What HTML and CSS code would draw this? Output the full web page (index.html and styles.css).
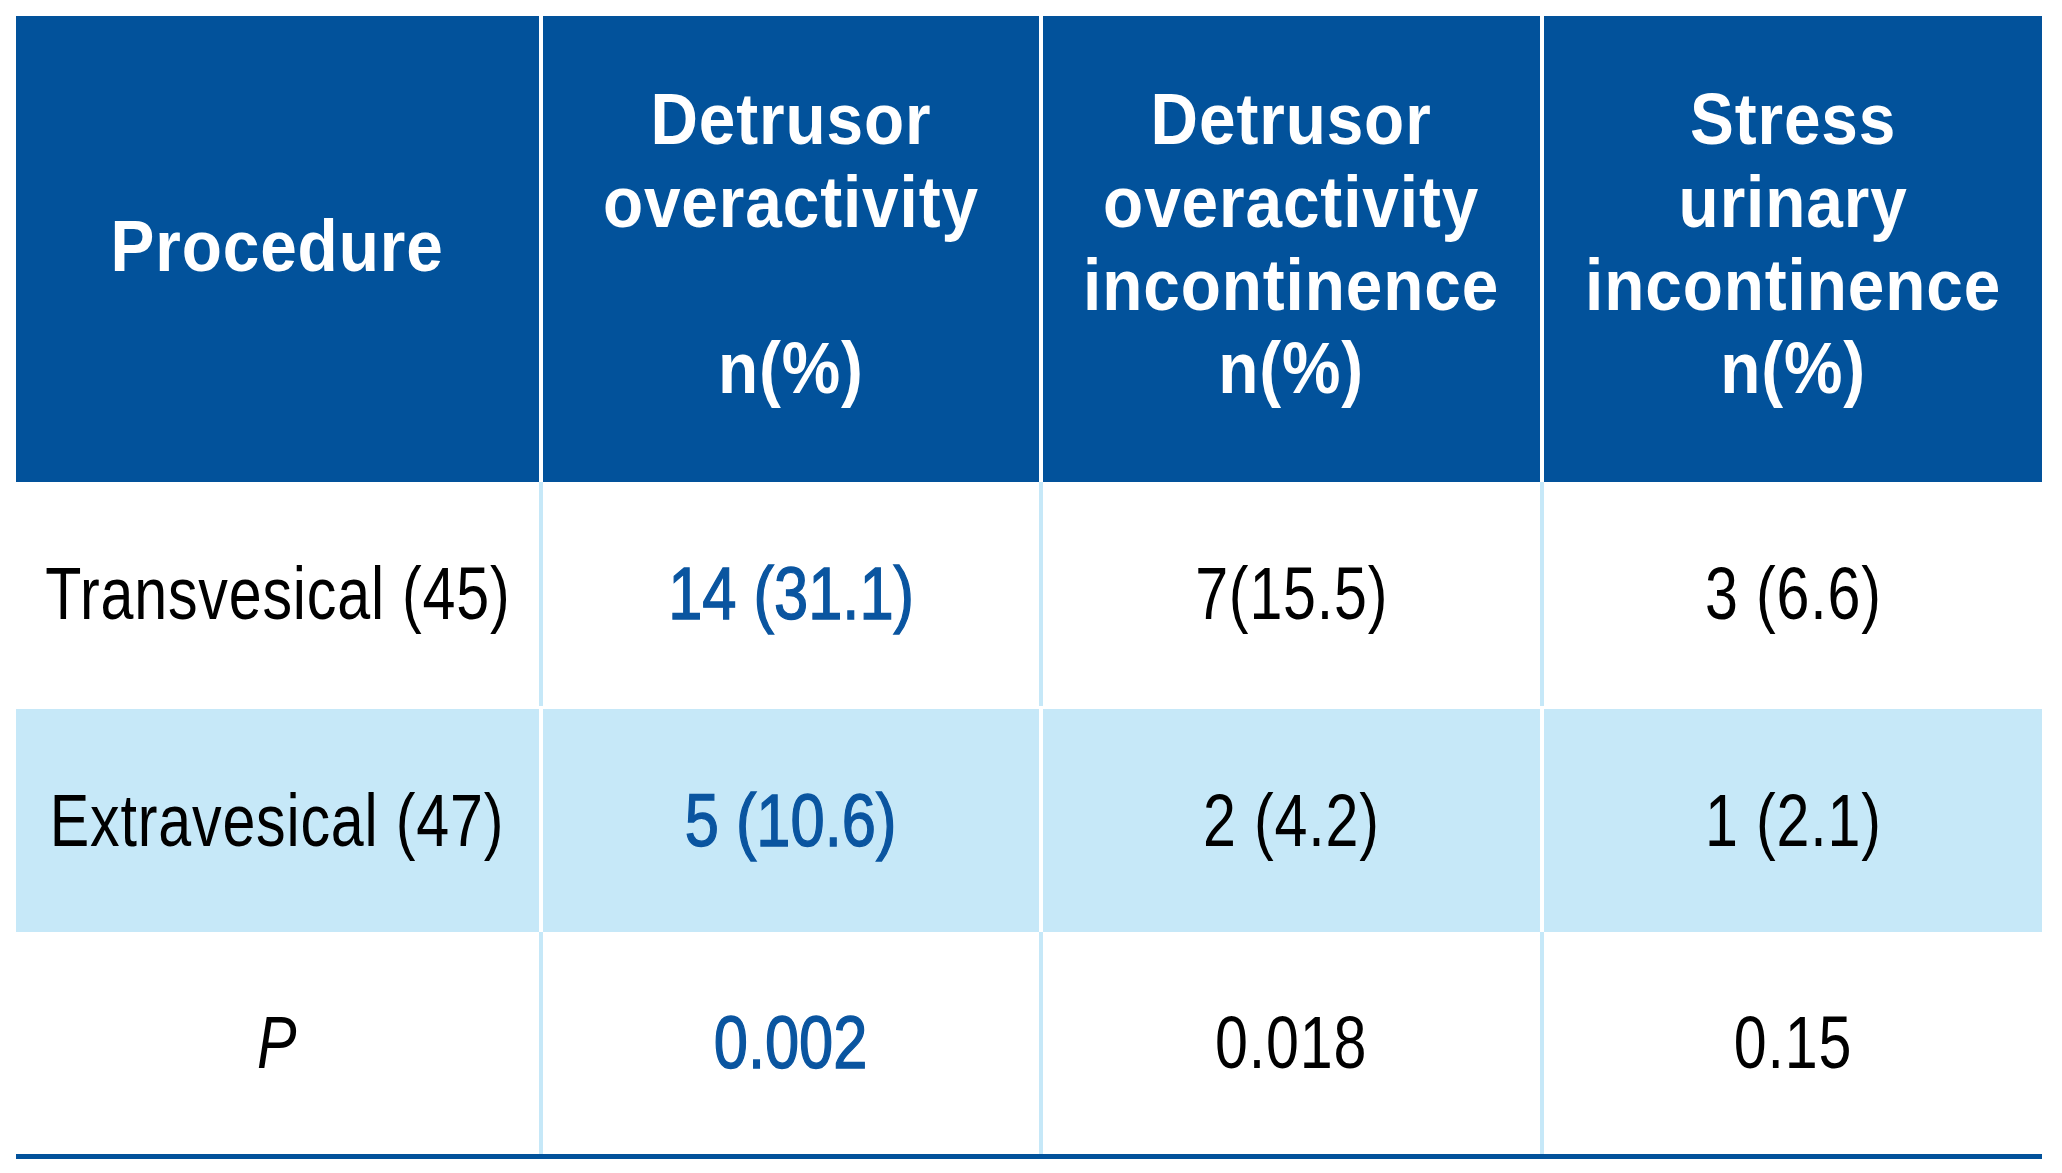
FILE: index.html
```html
<!DOCTYPE html>
<html lang="en">
<head>
<meta charset="utf-8">
<title>Procedure outcomes</title>
<link rel="stylesheet" href="styles.css">
</head>
<body>
<div class="page">
  <div class="tbl">
    <div class="row head">
      <div class="cell hcell hmid"><span class="htxt">Procedure</span></div>
      <div class="cell hcell"><span class="htxt"><span class="ln">Detrusor</span><span class="ln">overactivity</span><span class="ln">&nbsp;</span><span class="ln">n(%)</span></span></div>
      <div class="cell hcell"><span class="htxt"><span class="ln">Detrusor</span><span class="ln">overactivity</span><span class="ln">incontinence</span><span class="ln">n(%)</span></span></div>
      <div class="cell hcell"><span class="htxt"><span class="ln">Stress</span><span class="ln">urinary</span><span class="ln">incontinence</span><span class="ln">n(%)</span></span></div>
    </div>
    <div class="row body r1">
      <div class="cell"><span class="txt">Transvesical (45)</span></div>
      <div class="cell"><span class="txt em">14 (31.1)</span></div>
      <div class="cell"><span class="txt">7(15.5)</span></div>
      <div class="cell"><span class="txt">3 (6.6)</span></div>
    </div>
    <div class="row body alt">
      <div class="cell"><span class="txt">Extravesical (47)</span></div>
      <div class="cell"><span class="txt em">5 (10.6)</span></div>
      <div class="cell"><span class="txt">2 (4.2)</span></div>
      <div class="cell"><span class="txt">1 (2.1)</span></div>
    </div>
    <div class="row body r3">
      <div class="cell"><span class="txt it">P</span></div>
      <div class="cell"><span class="txt em">0.002</span></div>
      <div class="cell"><span class="txt">0.018</span></div>
      <div class="cell"><span class="txt">0.15</span></div>
    </div>
  </div>
</div>
</body>
</html>
```

FILE: styles.css
```css
html, body {
  margin: 0;
  padding: 0;
  background: #ffffff;
}

.page {
  padding: 16px;
  font-family: "Liberation Sans", Arial, sans-serif;
  color: #000000;
}

.tbl {
  width: 2026px;
  border-bottom: 5px solid #02529b;
}

.row {
  display: grid;
  grid-template-columns: 523px 500px 501px 502px;
}

.cell {
  display: flex;
  align-items: center;
  justify-content: center;
  border-left: 4px solid #c6e8f8;
  overflow: visible;
}

.cell:first-child {
  border-left: none;
}

/* Header */
.head {
  height: 466px;
}

.hcell {
  background: #02529b;
  border-left-color: #ffffff;
  align-items: flex-start;
  padding-top: 61px;
  box-sizing: border-box;
}

.hcell.hmid {
  align-items: center;
  padding-top: 0;
  padding-bottom: 8px;
}

.htxt {
  display: block;
  color: #ffffff;
  font-weight: 700;
  font-size: 73px;
  line-height: 83px;
  letter-spacing: 1px;
  text-align: center;
  white-space: nowrap;
  transform: scaleX(0.9);
  transform-origin: center;
}

.ln {
  display: block;
}

/* Body rows */
.body.r1 {
  height: 224px;
}

.body.alt {
  height: 223px;
  margin-top: 3px;
}

.body.alt .cell {
  background: #c6e8f8;
  border-left-color: #ffffff;
}

.body.r3 {
  height: 222px;
}

.txt {
  display: block;
  font-size: 74px;
  line-height: 74px;
  letter-spacing: 1px;
  white-space: nowrap;
  transform: scaleX(0.8);
  transform-origin: center;
}

.txt.em {
  color: #0a55a0;
  -webkit-text-stroke: 1.4px #0a55a0;
  letter-spacing: 0;
  transform: scaleX(0.83);
}

.txt.it {
  font-style: italic;
}
```
